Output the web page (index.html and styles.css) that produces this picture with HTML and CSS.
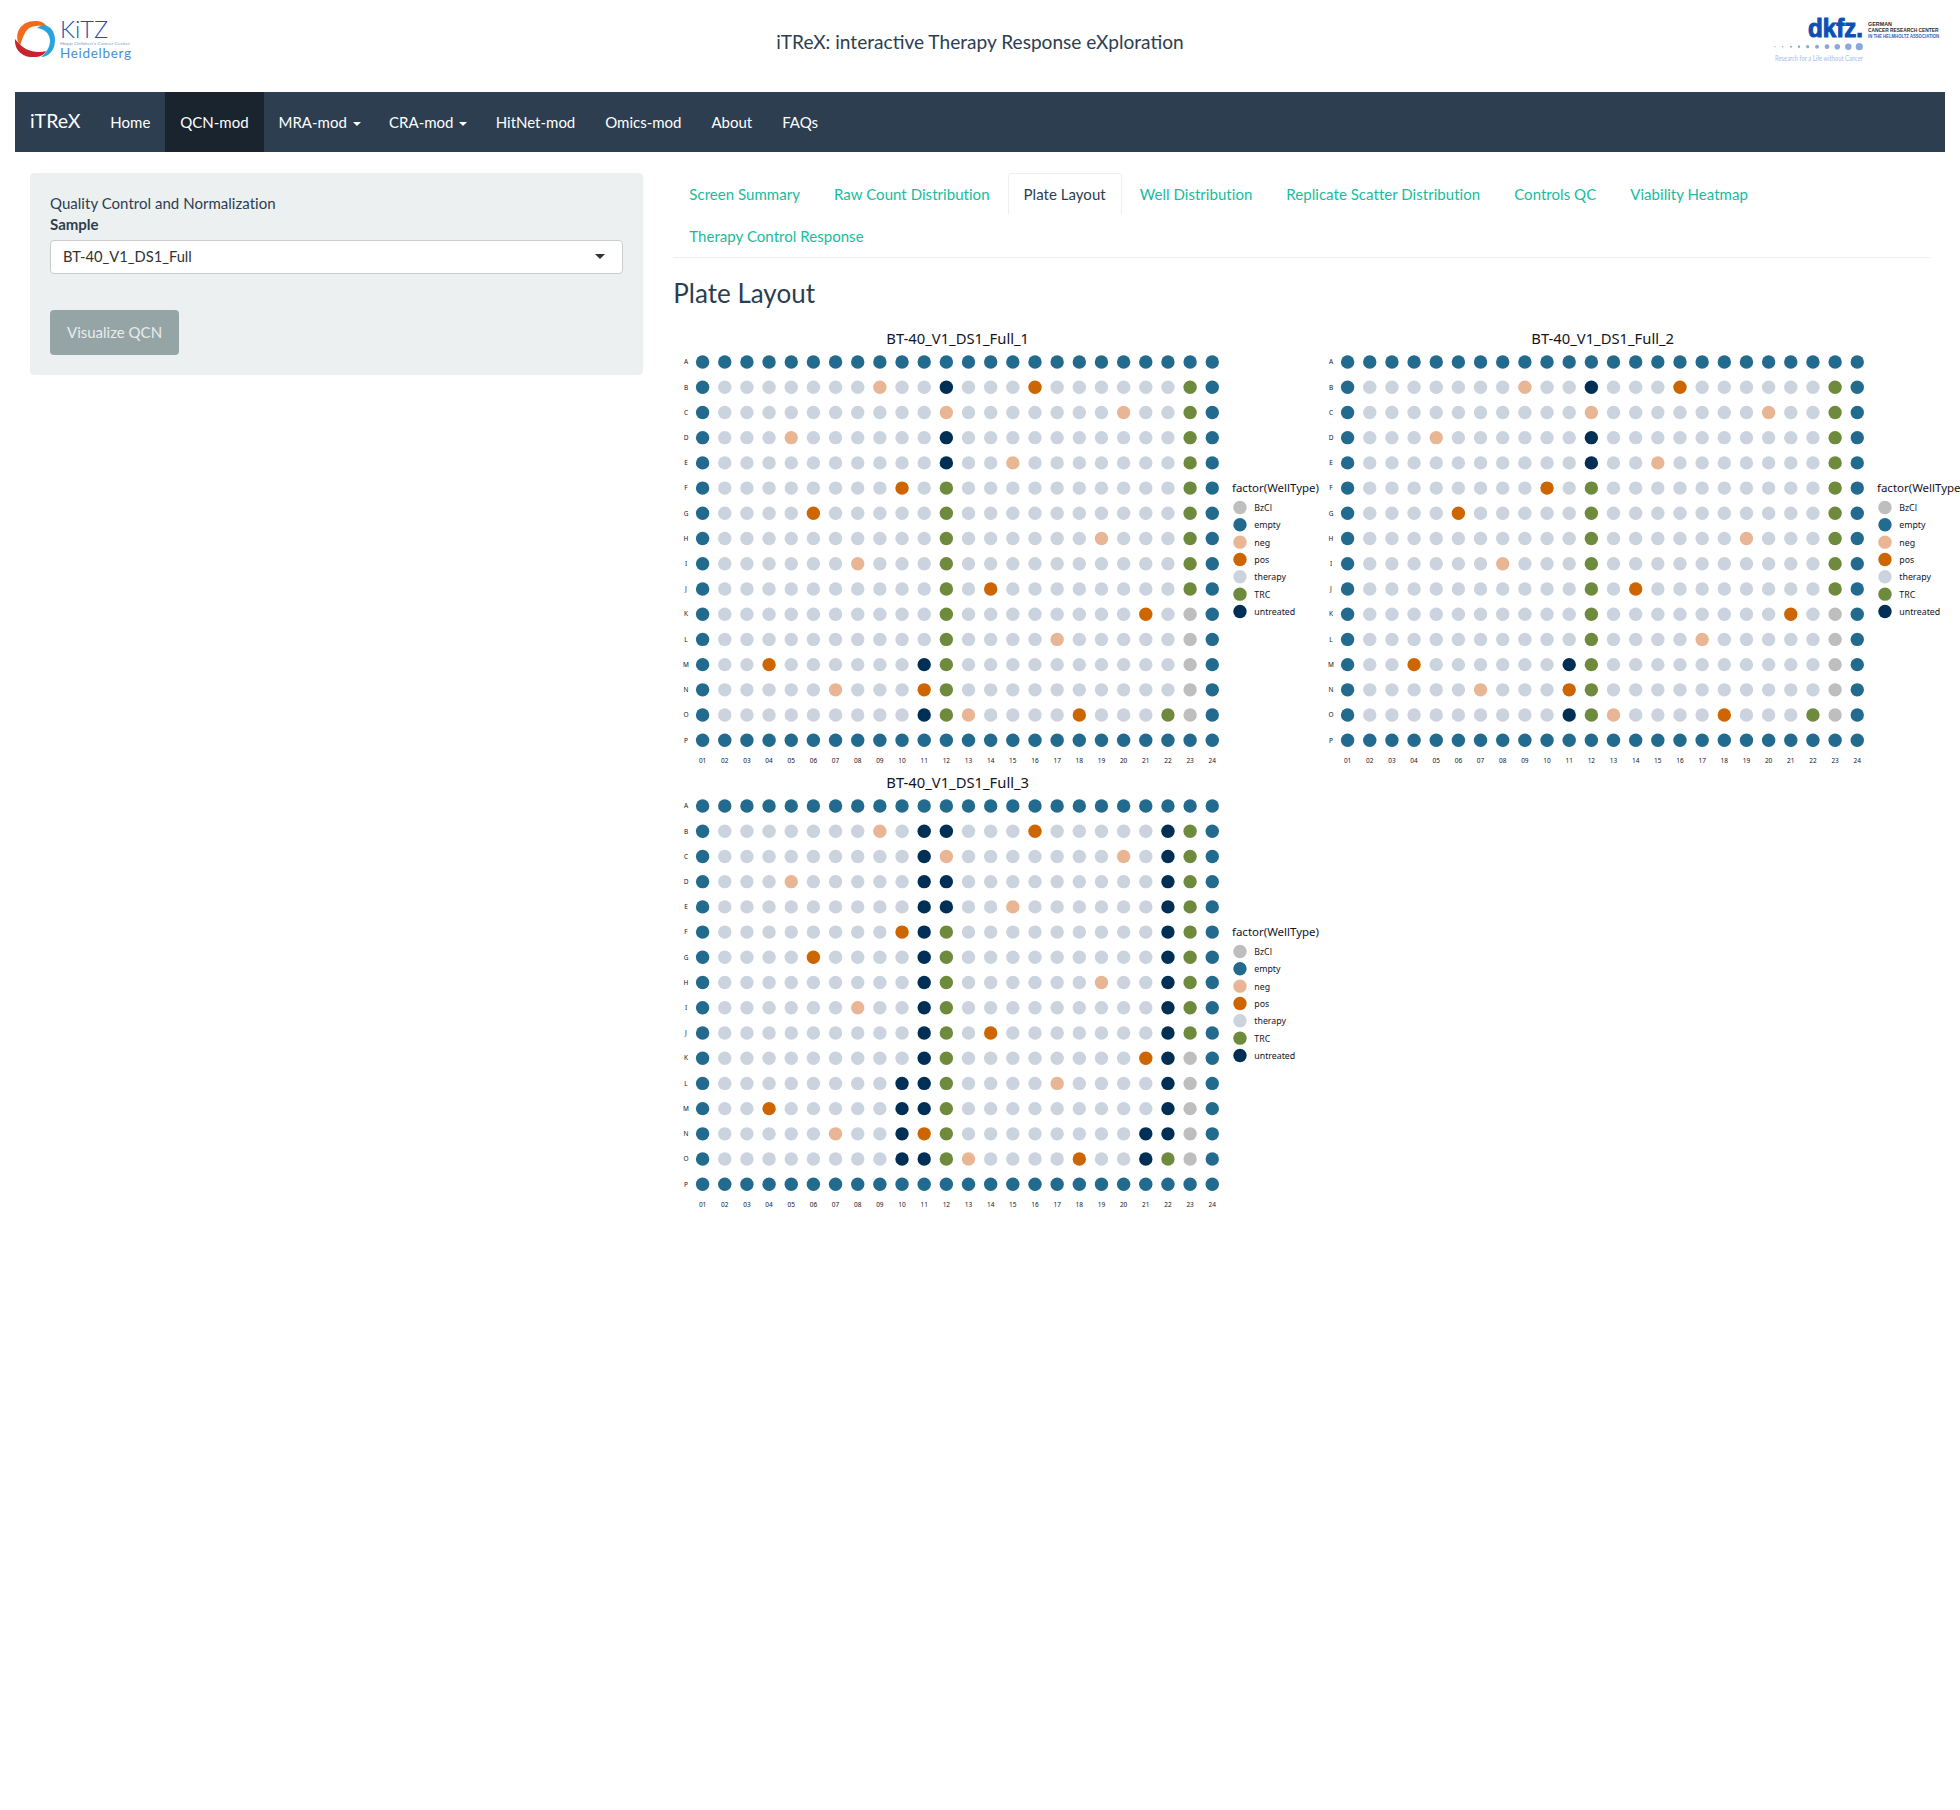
FILE: index.html
```html
<!DOCTYPE html>
<html lang="en">
<head>
<meta charset="utf-8">
<title>iTReX</title>
<link rel="stylesheet" href="styles.css">
</head>
<body>
<div class="page">
  <header class="topbar">
    <svg class="logo logo-kitz" viewBox="15 12 120 56" aria-label="KiTZ Heidelberg">
      <path class="ring-orange" d="M20 46C12 32 23 20 36 21C41 21 45 23 47 27C41 25 33 25 28 29C24 33 22 39 20 46Z"/>
      <path class="ring-red" d="M15 39C14 51 24 58 34 57C40 57 44 55 46 51C40 53 32 52 26 49C21 46 18 43 15 39Z"/>
      <path class="ring-blue" d="M37 28C46 21 55 29 55 40C55 50 49 57 41 57C46 53 50 47 50 41C50 34 45 29 37 28Z"/>
      <text class="kitz-name" x="60" y="38" textLength="48" lengthAdjust="spacingAndGlyphs">KiTZ</text>
      <text class="kitz-sub" x="60" y="45" textLength="70" lengthAdjust="spacingAndGlyphs">Hopp Children's Cancer Center</text>
      <text class="kitz-city" x="60" y="57.500" textLength="71" lengthAdjust="spacing">Heidelberg</text>
    </svg>
    <h1 class="apptitle">iTReX: interactive Therapy Response eXploration</h1>
    <svg class="logo logo-dkfz" viewBox="1770 12 175 56" aria-label="dkfz German Cancer Research Center">
      <text class="dkfz-name" x="1808" y="37" textLength="55" lengthAdjust="spacingAndGlyphs">dkfz.</text>
      <text class="dkfz-small" x="1868" y="25.500" textLength="24" lengthAdjust="spacingAndGlyphs">GERMAN</text>
      <text class="dkfz-small" x="1868" y="32" textLength="70.500" lengthAdjust="spacingAndGlyphs">CANCER RESEARCH CENTER</text>
      <text class="dkfz-small dkfz-blue" x="1868" y="37.500" textLength="71" lengthAdjust="spacingAndGlyphs">IN THE HELMHOLTZ ASSOCIATION</text>
      <g class="dkfz-dots">
        <circle cx="1775" cy="46.700" r=".6"/><circle cx="1782.700" cy="46.700" r=".8"/><circle cx="1791" cy="46.700" r="1"/><circle cx="1799" cy="46.700" r="1.200"/><circle cx="1807.700" cy="46.700" r="1.600"/><circle cx="1817" cy="46.700" r="2"/><circle cx="1827" cy="46.700" r="2.400"/><circle cx="1837.300" cy="46.700" r="2.800"/><circle cx="1848.300" cy="46.700" r="3.200"/><circle cx="1859.300" cy="46.700" r="3.600"/>
      </g>
      <text class="dkfz-claim" x="1775" y="61" textLength="88" lengthAdjust="spacingAndGlyphs">Research for a Life without Cancer</text>
    </svg>
  </header>

  <nav class="navbar">
    <a class="brand" href="#">iTReX</a>
    <a class="navitem" href="#">Home</a>
    <a class="navitem is-active" href="#">QCN-mod</a>
    <a class="navitem" href="#">MRA-mod <span class="caret"></span></a>
    <a class="navitem" href="#">CRA-mod <span class="caret"></span></a>
    <a class="navitem" href="#">HitNet-mod</a>
    <a class="navitem" href="#">Omics-mod</a>
    <a class="navitem" href="#">About</a>
    <a class="navitem" href="#">FAQs</a>
  </nav>

  <div class="layout">
    <aside class="sidebar">
      <div class="well">
        <div class="well-title">Quality Control and Normalization</div>
        <label class="field-label">Sample</label>
        <div class="select">
          <span>BT-40_V1_DS1_Full</span>
          <span class="select-arrow"></span>
        </div>
        <button class="btn" type="button">Visualize QCN</button>
      </div>
    </aside>
    <main class="main">
      <ul class="tabs">
        <li><a href="#">Screen Summary</a></li>
        <li><a href="#">Raw Count Distribution</a></li>
        <li class="is-active"><a href="#">Plate Layout</a></li>
        <li><a href="#">Well Distribution</a></li>
        <li><a href="#">Replicate Scatter Distribution</a></li>
        <li><a href="#">Controls QC</a></li>
        <li><a href="#">Viability Heatmap</a></li>
        <li><a href="#">Therapy Control Response</a></li>
      </ul>
      <h3 class="section-title">Plate Layout</h3>
      <div class="plots" id="plots"></div>
    </main>
  </div>
</div>
<script src="plots.js"></script>
</body>
</html>
```

FILE: styles.css
```css
* { box-sizing: border-box; }
html { overflow-x: hidden; }
body {
  margin: 0;
  font-family: Lato, "Liberation Sans", sans-serif;
  font-size: 15px;
  line-height: 1.42857;
  color: #2c3e50;
  background: #fff;
  overflow-x: hidden;
}
a { text-decoration: none; }

.page { padding: 0 15px; }

.topbar {
  display: grid;
  grid-template-columns: 1fr auto 1fr;
  align-items: center;
  height: 92px;
  padding-bottom: 24px;
  padding-top: 12px;
}
.logo { display: block; height: 56px; overflow: visible; }
.logo-kitz { width: 120px; }
.logo-dkfz { width: 175px; justify-self: end; }
.apptitle {
  margin: 3px 0 0;
  font-size: 19.100px;
  font-weight: 400;
  line-height: 1.1;
}
.ring-orange { fill: #f26a1b; }
.ring-red { fill: #c8242e; }
.ring-blue { fill: #2aa3dc; }
.kitz-name { font-family: Lato, sans-serif; font-size: 23.500px; font-weight: 300; fill: #1a52a8; }
.kitz-sub { font-family: Lato, sans-serif; font-size: 4.600px; fill: #7d9ccc; }
.kitz-city { font-family: Lato, sans-serif; font-size: 13.500px; font-weight: 400; fill: #4b8fcf; }
.dkfz-name { font-family: "Liberation Sans", sans-serif; font-size: 25px; font-weight: 700; fill: #0f4fb4; stroke: #0f4fb4; stroke-width: 1px; }
.dkfz-small { font-family: "Liberation Sans Narrow", "Liberation Sans", sans-serif; font-size: 5.400px; font-weight: 700; fill: #2b2b2b; }
.dkfz-blue { fill: #2f63bd; font-size: 4.600px; }
.dkfz-dots { fill: #8aa8dd; }
.dkfz-claim { font-family: Lato, sans-serif; font-size: 7.500px; fill: #a9bde6; }

.navbar {
  display: flex;
  align-items: stretch;
  height: 60px;
  margin-bottom: 21px;
  background: #2c3e50;
}
.brand {
  padding: 0 15px;
  font-size: 19.500px;
  line-height: 58px;
  color: #fff;
}
.navitem {
  padding: 0 15px;
  line-height: 60px;
  color: #fff;
  letter-spacing: -.01px;
}
.navitem.is-active { background: #1a242f; }
.caret {
  display: inline-block;
  width: 0;
  height: 0;
  margin: 0 -1.500px 0 2px;
  vertical-align: middle;
  border-top: 4px solid currentColor;
  border-left: 4px solid transparent;
  border-right: 4px solid transparent;
}

.layout {
  display: grid;
  grid-template-columns: 643.330px minmax(0, 1fr);
}
.sidebar { padding: 0 15px; }
.well {
  padding: 19px;
  background: #ecf0f1;
  border: 1px solid #ecf0f1;
  border-radius: 4px;
}
.well-title { line-height: 21.400px; letter-spacing: .03px; }
.field-label {
  display: block;
  margin-bottom: 4px;
  font-weight: 700;
  line-height: 21.400px;
}
.select {
  display: flex;
  align-items: center;
  justify-content: space-between;
  height: 34px;
  margin-bottom: 36px;
  padding: 0 17px 0 12px;
  background: #fff;
  border: 1px solid #c9cdd0;
  border-radius: 4px;
  color: #333;
  font-size: 14.700px;
}
.select-arrow {
  width: 0;
  height: 0;
  border-top: 5px solid #333;
  border-left: 5px solid transparent;
  border-right: 5px solid transparent;
}
.btn {
  display: block;
  height: 45px;
  padding: 0 17px;
  border: 0;
  border-radius: 4px;
  background: #95a5a6;
  color: #e8ecec;
  font: inherit;
}

.main { padding: 0 15px; }
.tabs {
  display: flex;
  flex-wrap: wrap;
  margin: 0;
  padding: 0;
  list-style: none;
  border-bottom: 1px solid #ecf0f1;
  letter-spacing: .04px;
}
.tabs li { margin-right: 2px; height: 42px; }
.tabs a {
  display: block;
  height: 42px;
  padding: 10px 15px;
  border: 1px solid transparent;
  border-radius: 4px 4px 0 0;
  color: #18bc9c;
}
.tabs .is-active a {
  color: #2c3e50;
  border-color: #ecf0f1 #ecf0f1 transparent;
}
.section-title {
  margin: 21px 0 18px;
  font-size: 26px;
  font-weight: 400;
  line-height: 1.1;
}

.plots {
  display: grid;
  grid-template-columns: repeat(2, 644.700px);
  grid-auto-rows: 444.700px;
}
.plate { display: block; width: 644.700px; height: 444.700px; overflow: visible; }
.plate text { font-family: "Noto Sans", sans-serif; fill: #14141f; }
.plate-title { font-size: 14.800px; text-anchor: middle; }
.axis-label { font-size: 6.500px; text-anchor: middle; }
.legend-title { font-size: 11.500px; }
.legend-label { font-size: 8.800px; }
.w-BzCl { fill: #bebebe; }
.w-empty { fill: #236a8f; }
.w-neg { fill: #e8b695; }
.w-pos { fill: #cd6600; }
.w-therapy { fill: #cbd3de; }
.w-TRC { fill: #6e8b3d; }
.w-untreated { fill: #002f56; }
```

FILE: plots.js
```js
(function () {
  var NS = "http://www.w3.org/2000/svg";
  var ROWS = "ABCDEFGHIJKLMNOP".split("");
  var LEGEND = ["BzCl", "empty", "neg", "pos", "therapy", "TRC", "untreated"];

  var full12 = {
    B: { 9: "neg", 12: "untreated", 16: "pos", 23: "TRC" },
    C: { 12: "neg", 20: "neg", 23: "TRC" },
    D: { 5: "neg", 12: "untreated", 23: "TRC" },
    E: { 12: "untreated", 15: "neg", 23: "TRC" },
    F: { 10: "pos", 12: "TRC", 23: "TRC" },
    G: { 6: "pos", 12: "TRC", 23: "TRC" },
    H: { 12: "TRC", 19: "neg", 23: "TRC" },
    I: { 8: "neg", 12: "TRC", 23: "TRC" },
    J: { 12: "TRC", 14: "pos", 23: "TRC" },
    K: { 12: "TRC", 21: "pos", 23: "BzCl" },
    L: { 12: "TRC", 17: "neg", 23: "BzCl" },
    M: { 4: "pos", 11: "untreated", 12: "TRC", 23: "BzCl" },
    N: { 7: "neg", 11: "pos", 12: "TRC", 23: "BzCl" },
    O: { 11: "untreated", 12: "TRC", 13: "neg", 18: "pos", 22: "TRC", 23: "BzCl" }
  };
  var full3 = {
    B: { 9: "neg", 11: "untreated", 12: "untreated", 16: "pos", 22: "untreated", 23: "TRC" },
    C: { 11: "untreated", 12: "neg", 20: "neg", 22: "untreated", 23: "TRC" },
    D: { 5: "neg", 11: "untreated", 12: "untreated", 22: "untreated", 23: "TRC" },
    E: { 11: "untreated", 12: "untreated", 15: "neg", 22: "untreated", 23: "TRC" },
    F: { 10: "pos", 11: "untreated", 12: "TRC", 22: "untreated", 23: "TRC" },
    G: { 6: "pos", 11: "untreated", 12: "TRC", 22: "untreated", 23: "TRC" },
    H: { 11: "untreated", 12: "TRC", 19: "neg", 22: "untreated", 23: "TRC" },
    I: { 8: "neg", 11: "untreated", 12: "TRC", 22: "untreated", 23: "TRC" },
    J: { 11: "untreated", 12: "TRC", 14: "pos", 22: "untreated", 23: "TRC" },
    K: { 11: "untreated", 12: "TRC", 21: "pos", 22: "untreated", 23: "BzCl" },
    L: { 10: "untreated", 11: "untreated", 12: "TRC", 17: "neg", 22: "untreated", 23: "BzCl" },
    M: { 4: "pos", 10: "untreated", 11: "untreated", 12: "TRC", 22: "untreated", 23: "BzCl" },
    N: { 7: "neg", 10: "untreated", 11: "pos", 12: "TRC", 21: "untreated", 22: "untreated", 23: "BzCl" },
    O: { 10: "untreated", 11: "untreated", 12: "TRC", 13: "neg", 18: "pos", 21: "untreated", 22: "TRC", 23: "BzCl" }
  };

  function el(name, attrs, text) {
    var node = document.createElementNS(NS, name);
    for (var key in attrs) node.setAttribute(key, attrs[key]);
    if (text) node.textContent = text;
    return node;
  }

  function wellType(map, row, col) {
    if (row === "A" || row === "P" || col === 1 || col === 24) return "empty";
    return (map[row] && map[row][col]) || "therapy";
  }

  function plate(title, map) {
    var svg = el("svg", { "class": "plate", viewBox: "0 0 644.7 444.7" });
    svg.appendChild(el("text", { "class": "plate-title", x: 284.7, y: 18 }, title));
    ROWS.forEach(function (row, r) {
      var cy = 36 + r * 25.22;
      svg.appendChild(el("text", { "class": "axis-label", x: 13, y: cy + 2.3 }, row));
      for (var col = 1; col <= 24; col++) {
        svg.appendChild(el("circle", {
          "class": "w-" + wellType(map, row, col),
          cx: (29.6 + (col - 1) * 22.16).toFixed(2),
          cy: cy.toFixed(2),
          r: 6.7
        }));
      }
    });
    for (var col = 1; col <= 24; col++) {
      svg.appendChild(el("text", {
        "class": "axis-label",
        x: (29.6 + (col - 1) * 22.16).toFixed(2),
        y: 436.6
      }, (col < 10 ? "0" : "") + col));
    }
    svg.appendChild(el("text", { "class": "legend-title", x: 559, y: 166.5 }, "factor(WellType)"));
    LEGEND.forEach(function (name, i) {
      var cy = 181.5 + i * 17.33;
      svg.appendChild(el("circle", { "class": "w-" + name, cx: 567, cy: cy.toFixed(2), r: 6.7 }));
      svg.appendChild(el("text", { "class": "legend-label", x: 581.3, y: (cy + 3.4).toFixed(2) }, name));
    });
    return svg;
  }

  var host = document.getElementById("plots");
  host.appendChild(plate("BT-40_V1_DS1_Full_1", full12));
  host.appendChild(plate("BT-40_V1_DS1_Full_2", full12));
  host.appendChild(plate("BT-40_V1_DS1_Full_3", full3));
})();
```
